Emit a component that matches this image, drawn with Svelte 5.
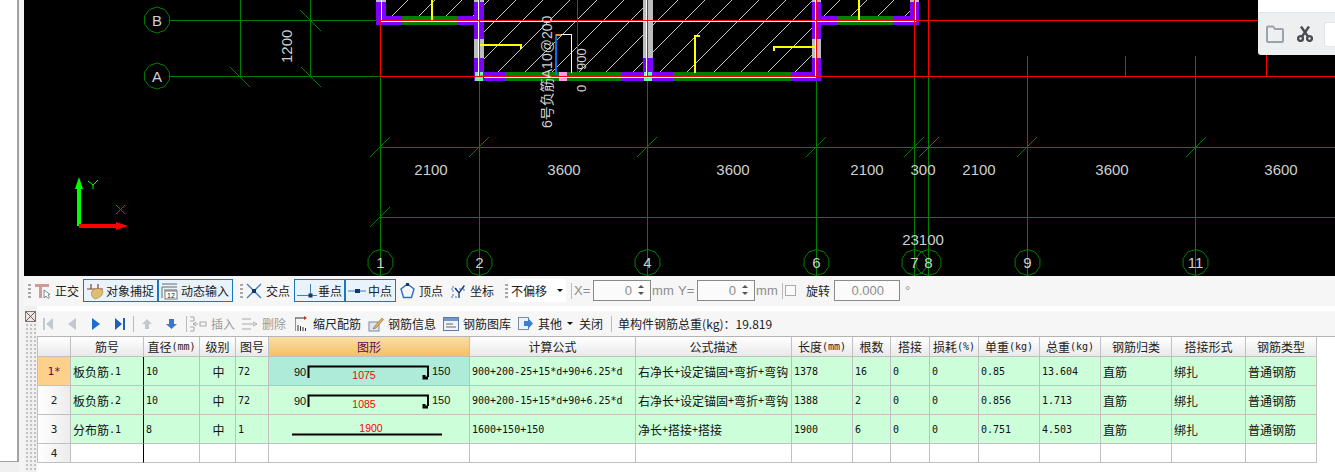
<script>
  const axisX = [
    { n: '1', x: 380 }, { n: '2', x: 479 }, { n: '4', x: 647 }, { n: '6', x: 816 },
    { n: '7', x: 914 }, { n: '8', x: 928 }, { n: '9', x: 1027 }, { n: '11', x: 1195 }
  ];
  const axisY = [{ n: 'B', y: 20 }, { n: 'A', y: 76 }];
  const dims = [
    ['2100', 431], ['3600', 564], ['3600', 733], ['2100', 867],
    ['300', 923], ['2100', 979], ['3600', 1112], ['3600', 1281]
  ];
  const ticks = [
    [230, 67, 250, 87], [300, 10, 321, 31], [301, 67, 321, 87],
    [370, 227, 390, 207], [370, 157, 390, 137], [469, 157, 489, 137],
    [637, 157, 657, 137], [806, 157, 826, 137], [904, 157, 924, 137], [919, 157, 939, 137],
    [1017, 157, 1037, 137], [1186, 157, 1206, 137]
  ];
  // wall pieces: x, y, w, h, colour
  const P = '#7f00ff', G = '#007f00', S = '#bdbdbd';
  const walls = [
    [376, 2, 10, 23, P], [376, 0, 10, 2, S], [386, 16, 16, 9, P], [402, 16, 56, 9, G], [458, 16, 16, 9, P],
    [474, 0, 10, 2, S], [474, 2, 10, 37, P], [474, 39, 10, 19, S], [474, 58, 10, 23, P],
    [484, 72, 21, 9, P], [505, 72, 117, 9, G], [559, 72, 8, 9, '#ff99e6'], [622, 72, 21, 9, P],
    [643, 0, 10, 58, S], [643, 58, 10, 23, P],
    [653, 72, 20, 9, P], [673, 72, 118, 9, G], [791, 72, 21, 9, P],
    [812, 0, 9, 2, S], [812, 2, 9, 37, P], [812, 39, 9, 19, S], [812, 58, 9, 23, P],
    [821, 16, 16, 9, P], [837, 16, 57, 9, G], [894, 16, 16, 9, P], [910, 2, 9, 23, P], [910, 0, 9, 2, S]
  ];
  const rooms = [[386, 0, 88, 16], [484, 0, 159, 72], [653, 0, 159, 72], [821, 0, 89, 16]];
  const hatch = [];
  for (let c = 300; c < 1020; c += 27) hatch.push(c);
  const corners = [[474, 72], [643, 72]];

  function decagon(cx, cy, r) {
    const pts = [];
    for (let i = 0; i < 10; i++) {
      const a = (Math.PI / 5) * i + Math.PI / 10;
      pts.push((cx + r * Math.cos(a)).toFixed(1) + ',' + (cy + r * Math.sin(a)).toFixed(1));
    }
    return pts.join(' ');
  }

  // the old grid font is half width for latin, so latin and CJK runs get separate spans
  function runs(text) {
    return String(text).match(/[\x20-\x7e]+|[^\x20-\x7e]+/g) ?? [];
  }
  const isAscii = (s) => /^[\x20-\x7e]/.test(s);

  const headers = ['', '筋号', '直径(mm)', '级别', '图号', '图形', '计算公式', '公式描述', '长度(mm)', '根数', '搭接', '损耗(%)', '单重(kg)', '总重(kg)', '钢筋归类', '搭接形式', '钢筋类型'];
  const rows = [
    { no: '1*', name: '板负筋.1', d: '10', fig: '72', shape: 'hook', a: '90', m: '1075', b: '150', f: '900+200-25+15*d+90+6.25*d', desc: '右净长+设定锚固+弯折+弯钩', len: '1378', cnt: '16', uw: '0.85', tw: '13.604' },
    { no: '2', name: '板负筋.2', d: '10', fig: '72', shape: 'hook', a: '90', m: '1085', b: '150', f: '900+200-15+15*d+90+6.25*d', desc: '右净长+设定锚固+弯折+弯钩', len: '1388', cnt: '2', uw: '0.856', tw: '1.713' },
    { no: '3', name: '分布筋.1', d: '8', fig: '1', shape: 'line', m: '1900', f: '1600+150+150', desc: '净长+搭接+搭接', len: '1900', cnt: '6', uw: '0.751', tw: '4.503' }
  ];
</script>

{#snippet txt(value)}
  {#each runs(value) as r}<span class:asc={isAscii(r)}>{r}</span>{/each}
{/snippet}

<div class="page">
  <div class="side">
    <div class="side-white"></div>
    <div class="side-foot"></div>
  </div>
  <div class="main">
    <div class="canvas">
      <svg class="cad" viewBox="24 0 1311 276" width="1311" height="276">
        <defs>
          {#each rooms as r, i}
            <clipPath id="room{i}"><rect x={r[0]} y={r[1]} width={r[2]} height={r[3]} /></clipPath>
          {/each}
        </defs>
        <g shape-rendering="crispEdges">
          {#each rooms as r, i}
            <g clip-path="url(#room{i})">
              {#each hatch as c}
                <line x1={c - 100} y1="100" x2={c} y2="0" stroke="#c8c8c8" />
              {/each}
            </g>
          {/each}
          <!-- axis lines -->
          <g stroke="#008000">
            <line x1="170" y1="20.5" x2="380" y2="20.5" />
            <line x1="170" y1="76.5" x2="380" y2="76.5" />
            <line x1="240.5" y1="0" x2="240.5" y2="76" />
            <line x1="310.5" y1="0" x2="310.5" y2="76" />
            <line x1="380" y1="147.5" x2="1335" y2="147.5" />
            <line x1="380" y1="217.5" x2="1335" y2="217.5" />
            {#each axisX as a}
              <line x1={a.x + 0.5} y1="77" x2={a.x + 0.5} y2="276" />
            {/each}
          </g>
          <!-- walls -->
          {#each walls as w}
            <rect x={w[0]} y={w[1]} width={w[2]} height={w[3]} fill={w[4]} />
          {/each}
          {#each corners as c}
            <rect x={c[0] + 1} y={c[1]} width="8" height="9" fill="#66ff99" />
            <rect x={c[0] + 4} y={c[1] + 3} width="5" height="2" fill="#00ccff" />
          {/each}
          <!-- yellow bars -->
          <g fill="#ffff00">
            <rect x="431" y="0" width="2" height="20" />
            <rect x="858" y="0" width="2" height="20" />
            <rect x="479" y="44" width="42" height="2" />
            <rect x="520" y="44" width="2" height="5" />
            <rect x="773" y="46" width="42" height="2" />
            <rect x="773" y="46" width="2" height="5" />
            <rect x="694" y="35" width="2" height="38" />
            <rect x="694" y="35" width="6" height="2" />
          </g>
          <!-- white centre lines -->
          <g stroke="#ffffff">
            <line x1="381" y1="0" x2="381" y2="20" />
            <line x1="380" y1="21.5" x2="916" y2="21.5" />
            <line x1="478.5" y1="0" x2="478.5" y2="77" />
            <line x1="646.5" y1="0" x2="646.5" y2="77" />
            <line x1="815.5" y1="0" x2="815.5" y2="77" />
            <line x1="915" y1="0" x2="915" y2="22" />
            <line x1="484" y1="77.5" x2="816" y2="77.5" />
          </g>
          <!-- red frame -->
          <g stroke="#ff0000">
            <line x1="380" y1="20.5" x2="1258" y2="20.5" />
            <line x1="380" y1="76.5" x2="1335" y2="76.5" />
            <line x1="380.5" y1="20" x2="380.5" y2="76" />
            <line x1="479.5" y1="0" x2="479.5" y2="76" />
            <line x1="577.5" y1="0" x2="577.5" y2="76" />
            <line x1="647.5" y1="0" x2="647.5" y2="76" />
            <line x1="816.5" y1="0" x2="816.5" y2="76" />
            <line x1="914.5" y1="0" x2="914.5" y2="76" />
            <line x1="928.5" y1="0" x2="928.5" y2="76" />
            <line x1="1027.5" y1="56" x2="1027.5" y2="76" />
            <line x1="1125.5" y1="56" x2="1125.5" y2="76" />
            <line x1="1195.5" y1="56" x2="1195.5" y2="76" />
            <line x1="1266.5" y1="0" x2="1266.5" y2="76" />
          </g>
          <!-- rebar sketch -->
          <rect x="555" y="34" width="2" height="41" fill="#0a6ee6" />
          <rect x="556" y="34" width="5" height="2" fill="#e8862a" />
          <rect x="561" y="34" width="11" height="1" fill="#ffffff" />
          <rect x="571" y="34" width="1" height="39" fill="#ffffff" />
        </g>
        <!-- ticks and bubbles -->
        <g stroke="#008000" fill="none">
          {#each ticks as t}
            <line x1={t[0]} y1={t[1]} x2={t[2]} y2={t[3]} />
          {/each}
          {#each axisY as a}
            <polygon points={decagon(157, a.y, 13)} />
          {/each}
          {#each axisX as a}
            <polygon points={decagon(a.x + 0.5, 262.5, 13)} />
          {/each}
        </g>
        <g class="cad-text">
          {#each axisY as a}
            <text x="157" y={a.y + 6} text-anchor="middle">{a.n}</text>
          {/each}
          {#each axisX as a}
            <text x={a.x + 0.5} y="268" text-anchor="middle">{a.n}</text>
          {/each}
          {#each dims as d}
            <text x={d[1]} y="175" text-anchor="middle">{d[0]}</text>
          {/each}
          <text x="923" y="245" text-anchor="middle">23100</text>
          <text transform="translate(292 63) rotate(-90)">1200</text>
          <text class="small" transform="translate(552 128) rotate(-90)">6号负筋A10@200</text>
          <text class="tiny" transform="translate(586 70) rotate(-90)">900</text>
          <text class="tiny" transform="translate(586 92) rotate(-90)">0</text>
        </g>
        <!-- ucs -->
        <g shape-rendering="crispEdges">
          <rect x="77" y="187" width="4" height="39" fill="#00ff00" />
          <rect x="79" y="224" width="39" height="4" fill="#ff0000" />
        </g>
        <polygon points="79,177 83,189 75,189" fill="#00ff00" />
        <polygon points="128,226 116,222 116,230" fill="#ff0000" />
        <path d="M88 181 L93 185 L98 180 M93 185 V189" stroke="#00ff00" fill="none" />
        <path d="M116 205 L125 214 M125 205 L116 214" stroke="#ff0000" fill="none" />
      </svg>

      <div class="float">
        <div class="float-top"></div>
        <div class="float-body">
          <svg width="20" height="18" viewBox="0 0 20 18" class="fold">
            <path d="M2 16 V2.5 Q2 1.5 3 1.5 H8 L10 4 H17 Q18 4 18 5 V16 Q18 17 17 17 H3 Q2 17 2 16 Z" fill="none" stroke="#9aa3ab" stroke-width="2" />
          </svg>
          <svg width="16" height="16" viewBox="0 0 16 16" class="sciss">
            <g fill="none" stroke="#4a4d50" stroke-width="2.4">
              <circle cx="3.5" cy="12.5" r="2.4" />
              <circle cx="12.5" cy="12.5" r="2.4" />
              <path d="M5 10.5 L12 0.5 M11 10.5 L4 0.5" />
            </g>
          </svg>
          <div class="float-input"></div>
        </div>
      </div>
    </div>

    <div class="bar1">
      <span class="grip"></span>
      <div class="tool t-ortho">
        <svg width="16" height="16" viewBox="0 0 16 16">
          <path d="M0 2.5 H14 M5.5 2 V15" stroke="#d09a9a" stroke-width="3" fill="none" />
          <path d="M9 7 V15 L11 13 L13 15.5 L14.5 14.5 L13 12 L15 11.5 Z" fill="#fff" stroke="#5a6a7a" stroke-width="0.8" />
        </svg>
        <span>正交</span>
      </div>
      <div class="tool on w75 ml4">
        <svg width="18" height="18" viewBox="0 0 18 18">
          <path d="M1 7 H17 M5 2 V7 M12 2 V7" stroke="#9a3a2a" stroke-width="1.2" fill="none" />
          <path d="M6 9 Q12 4 17 9 Q17 15 9 17 Q4 14 6 9 Z" fill="#e0c070" stroke="#a08030" stroke-width="0.6" />
        </svg>
        <span>对象捕捉</span>
      </div>
      <div class="tool on w75 gap3">
        <svg width="17" height="18" viewBox="0 0 17 18">
          <path d="M1 2 H16 M1 5 H16 M1 5 V16 M3 8 H16" stroke="#6a6a6a" fill="none" />
          <rect x="4" y="9" width="12" height="8" fill="#fff" stroke="#777" />
          <text x="10" y="16" class="mini" text-anchor="middle">12</text>
        </svg>
        <span>动态输入</span>
      </div>
      <span class="grip g2"></span>
      <div class="tool t-cross">
        <svg width="16" height="16" viewBox="0 0 16 16">
          <path d="M1 1 L15 15 M15 1 L1 15" stroke="#3d7fc4" stroke-width="1.4" />
          <rect x="6" y="6" width="4" height="4" fill="#10386f" />
        </svg>
        <span>交点</span>
      </div>
      <div class="tool on w51 ml4">
        <svg width="20" height="16" viewBox="0 0 20 16">
          <path d="M0 12.5 H20" stroke="#3d7fc4" />
          <path d="M13.5 1 V12" stroke="#3d7fc4" />
          <rect x="11.5" y="10.5" width="4" height="4" fill="#10386f" />
        </svg>
        <span>垂点</span>
      </div>
      <div class="tool on w51 gap2">
        <svg width="18" height="16" viewBox="0 0 18 16">
          <path d="M0 8 H18" stroke="#3d7fc4" />
          <rect x="7" y="6" width="5" height="4" fill="#10386f" />
        </svg>
        <span>中点</span>
      </div>
      <div class="tool ml4">
        <svg width="15" height="16" viewBox="0 0 15 16">
          <path d="M7.5 1 L14 6 L11.5 14.5 H3.5 L1 6 Z" fill="none" stroke="#2f6fc0" stroke-width="1.4" />
          <rect x="6" y="0" width="3" height="3" fill="#10386f" />
        </svg>
        <span>顶点</span>
      </div>
      <div class="tool ml7">
        <svg width="16" height="16" viewBox="0 0 16 16">
          <path d="M1 6 H14 M1 14 H8 M3 3 V15 M14 2 V10" stroke="#3d7fc4" stroke-dasharray="2 2" fill="none" />
          <path d="M5 5 L9 10 L14 3 M9 10 V15" stroke="#10386f" stroke-width="1.3" fill="none" />
        </svg>
        <span>坐标</span>
      </div>
      <span class="grip g3"></span>
      <div class="select">
        <span>不偏移</span>
        <i class="caret"></i>
      </div>
      <span class="sep s1"></span>
      <span class="lbl x">X=</span>
      <div class="num n1"><span>0</span><b></b></div>
      <span class="lbl mm">mm</span>
      <span class="lbl y">Y=</span>
      <div class="num n1"><span>0</span><b></b></div>
      <span class="lbl mm">mm</span>
      <span class="sep s2"></span>
      <span class="check"></span>
      <span class="rot">旋转</span>
      <div class="num n2"><span>0.000</span><b></b></div>
      <span class="lbl deg">°</span>
    </div>

    <div class="lower">
      <div class="grip-col">
        <svg width="11" height="11" viewBox="0 0 11 11" class="close-x">
          <rect x="0.5" y="0.5" width="10" height="10" fill="#e8e8e8" stroke="#777" />
          <path d="M1 1 L10 10 M10 1 L1 10" stroke="#8a4a4a" />
        </svg>
        <div class="dots"></div>
      </div>
      <div class="panel">
        <div class="bar2">
          <svg class="nav n-first" width="10" height="12" viewBox="0 0 10 12"><path d="M0 0 H2 V12 H0 Z M10 0 V12 L3 6 Z" fill="#c4c8cc" /></svg>
          <svg class="nav n-prev" width="8" height="12" viewBox="0 0 8 12"><path d="M8 0 V12 L0 6 Z" fill="#c4c8cc" /></svg>
          <svg class="nav n-next" width="8" height="12" viewBox="0 0 8 12"><path d="M0 0 V12 L8 6 Z" fill="#1f6fd0" /></svg>
          <svg class="nav n-last" width="10" height="12" viewBox="0 0 10 12"><path d="M0 0 V12 L7 6 Z M8 0 H10 V12 H8 Z" fill="#1f5fb8" /></svg>
          <span class="sep s3"></span>
          <svg class="nav n-up" width="10" height="10" viewBox="0 0 10 10"><path d="M5 0 L10 5 H7 V10 H3 V5 H0 Z" fill="#c4c8cc" /></svg>
          <svg class="nav n-down" width="11" height="10" viewBox="0 0 11 10"><path d="M5.5 10 L11 5 H8 V0 H3 V5 H0 Z" fill="#3a78d0" /></svg>
          <span class="sep s4"></span>
          <div class="tool off b-ins">
            <svg width="17" height="16" viewBox="0 0 17 16"><path d="M0 1 H4 V5 H0 M0 11 H4 V15 H0 M8 8 H3 M6 6 L3 8 L6 10" stroke="#a8a8a8" fill="none" /><rect x="10" y="6" width="6" height="4" fill="none" stroke="#a8a8a8" /></svg>
            <span>插入</span>
          </div>
          <div class="tool off b-del">
            <svg width="16" height="16" viewBox="0 0 16 16"><path d="M0 3 H9 M0 8 H12 M0 13 H9 M11 6 L15 8 L11 10" stroke="#a8a8a8" fill="none" /></svg>
            <span>删除</span>
          </div>
          <div class="tool gap6 b-scale">
            <svg width="12" height="16" viewBox="0 0 12 16"><path d="M0 2 V15 M0 2 H9 M3 15 V9 M5.5 15 V10 M8 15 V11 M10.5 15 V12" stroke="#333" fill="none" /><path d="M9 0 L12 2 L9 4 Z" fill="#c03020" /></svg>
            <span>缩尺配筋</span>
          </div>
          <div class="tool b-info">
            <svg width="16" height="16" viewBox="0 0 16 16"><rect x="1" y="6" width="10" height="9" fill="#dfe6f0" stroke="#7a8aa0" /><path d="M6 11 L14 2 L15.5 3.5 L8 12 L5 13 Z" fill="#e8b060" stroke="#8a6030" stroke-width="0.6" /></svg>
            <span>钢筋信息</span>
          </div>
          <div class="tool b-lib">
            <svg width="16" height="14" viewBox="0 0 16 14"><rect x="0.5" y="0.5" width="15" height="13" fill="#f0f4fa" stroke="#5a7aa8" /><rect x="1" y="1" width="14" height="3" fill="#6f98d0" /><path d="M3 7 H10 M3 10 H13" stroke="#666" /></svg>
            <span>钢筋图库</span>
          </div>
          <div class="tool gap5 b-other">
            <svg width="15" height="15" viewBox="0 0 15 15"><rect x="0.5" y="1.5" width="10" height="12" fill="#eef2f8" stroke="#7a8aa0" /><path d="M6 5 H10 V2 L15 7.5 L10 13 V10 H6 Z" fill="#3a7fd0" /></svg>
            <span>其他</span>
            <i class="caret small"></i>
          </div>
          <span class="close-txt">关闭</span>
          <span class="sep s5"></span>
          <span class="total">单构件钢筋总重(kg)：19.819</span>
        </div>

        <div class="grid">
          {#each headers as h, i}
            <div class="cell head" class:hot={i === 5}>{@render txt(h)}</div>
          {/each}
          {#each rows as r, i}
            <div class="cell rowhead" class:cur={i === 0}>{r.no}</div>
            <div class="cell body thick">{@render txt(r.name)}</div>
            <div class="cell body">{@render txt(r.d)}</div>
            <div class="cell body mid">中</div>
            <div class="cell body">{@render txt(r.fig)}</div>
            <div class="cell body shape" class:sel={i === 0}>
              <svg width="200" height="28" viewBox="0 0 200 28">
                {#if r.shape === 'hook'}
                  <text x="25" y="19" class="dim">{r.a}</text>
                  <path d="M39.5 21 V9.5 H159 V20" fill="none" stroke="#000" stroke-width="2" />
                  <path d="M159 21 H155 V18" fill="none" stroke="#000" stroke-width="3" />
                  <text x="95" y="22" class="red" text-anchor="middle">{r.m}</text>
                  <text x="163" y="18" class="dim">{r.b}</text>
                {:else}
                  <text x="102" y="17" class="red" text-anchor="middle">{r.m}</text>
                  <path d="M23 19.5 H173" stroke="#000" stroke-width="2" />
                {/if}
              </svg>
            </div>
            <div class="cell body">{@render txt(r.f)}</div>
            <div class="cell body">{@render txt(r.desc)}</div>
            <div class="cell body">{@render txt(r.len)}</div>
            <div class="cell body">{@render txt(r.cnt)}</div>
            <div class="cell body">{@render txt('0')}</div>
            <div class="cell body">{@render txt('0')}</div>
            <div class="cell body">{@render txt(r.uw)}</div>
            <div class="cell body">{@render txt(r.tw)}</div>
            <div class="cell body">直筋</div>
            <div class="cell body">绑扎</div>
            <div class="cell body">普通钢筋</div>
          {/each}
          <div class="cell rowhead">4</div>
          <div class="cell thick"></div>
          {#each Array(15) as _}
            <div class="cell"></div>
          {/each}
        </div>
      </div>
    </div>
  </div>
</div>

<style>
  :global(body) {
    margin: 0;
    background: #fff;
    overflow: hidden;
  }
  .page {
    display: flex;
    width: 1335px;
    height: 472px;
    overflow: hidden;
    font: 12px "Noto Sans CJK SC", "Liberation Sans", sans-serif;
    color: #222;
  }
  .side {
    width: 19px;
    flex: none;
    display: flex;
    flex-direction: column;
  }
  .side-white {
    height: 462px;
    box-sizing: border-box;
    border-right: 2px solid #a2a2a2;
    border-bottom: 1px solid #a2a2a2;
  }
  .side-foot {
    flex: 1;
    background: #f0f0f0;
  }
  .main {
    flex: 1;
    min-width: 0;
    padding-left: 5px;
    background: #f4f4f4;
  }
  .canvas {
    position: relative;
    height: 276px;
    background: #000;
    overflow: hidden;
  }
  .cad {
    display: block;
  }
  .cad-text text {
    font: 15px "Liberation Sans", "Noto Sans CJK SC", sans-serif;
    fill: #cfcfcf;
  }
  .cad-text text.small {
    font-size: 14px;
  }
  .cad-text text.tiny {
    font-size: 13px;
  }
  .mini {
    font: 7px "Liberation Sans", sans-serif;
    fill: #222;
  }

  .float {
    position: absolute;
    top: 0;
    left: 1234px;
    width: 77px;
  }
  .float-top {
    height: 12px;
    background: #fff;
  }
  .float-body {
    height: 43px;
    background: #edeff0;
    border-top: 1px solid #dfe3e6;
    box-sizing: border-box;
    border-bottom-left-radius: 3px;
    display: flex;
    align-items: center;
  }
  .fold {
    margin-left: 7px;
  }
  .sciss {
    margin-left: 12px;
  }
  .float-input {
    width: 11px;
    height: 25px;
    margin-left: 11px;
    background: #fff;
    border-radius: 3px 0 0 3px;
    border: 1px solid #e2e4e6;
    border-right: 0;
    box-sizing: border-box;
  }

  .bar1 {
    height: 30px;
    display: flex;
    align-items: center;
    background: #f6f6f6;
    padding-left: 4px;
    padding-bottom: 3px;
    box-sizing: border-box;
    padding-top: 2px;
    white-space: nowrap;
  }
  .grip {
    width: 3px;
    height: 14px;
    flex: none;
    background: repeating-linear-gradient(#a8a8a8 0 2px, transparent 2px 4px);
  }
  .g2 {
    margin-left: 7px;
  }
  .g3 {
    margin-left: 11px;
  }
  .tool {
    display: flex;
    align-items: center;
    gap: 4px;
    flex: none;
    height: 23px;
    box-sizing: border-box;
  }
  .tool svg {
    flex: none;
  }
  .t-ortho {
    margin-left: 4px;
  }
  .t-cross {
    margin-left: 3px;
  }
  .on {
    border: 1px solid #1678c2;
    background: #e9f3fb;
    padding-left: 2px;
    gap: 2px;
  }
  .w75 {
    width: 75px;
  }
  .w51 {
    width: 51px;
    gap: 1px;
  }
  .gap2 {
    gap: 2px;
  }
  .gap3 {
    gap: 3px;
  }
  .ml4 {
    margin-left: 4px;
  }
  .ml7 {
    margin-left: 7px;
  }
  .select {
    width: 57px;
    height: 23px;
    margin-left: 1px;
    background: #fff;
    display: flex;
    align-items: center;
    justify-content: space-between;
    padding: 0 3px 0 2px;
    box-sizing: border-box;
    flex: none;
  }
  .caret {
    width: 0;
    height: 0;
    border: 3px solid transparent;
    border-top: 3px solid #111;
    border-bottom: 0;
    flex: none;
  }
  .sep {
    width: 1px;
    height: 16px;
    background: #bbb;
    flex: none;
  }
  .s1 {
    margin-left: 5px;
  }
  .s2 {
    margin-left: 5px;
  }
  .lbl {
    color: #8c8c8c;
    font: 13px "Liberation Sans", sans-serif;
    flex: none;
  }
  .x {
    margin-left: 2px;
    width: 19px;
  }
  .y {
    margin-left: 5px;
    width: 19px;
  }
  .mm {
    margin-left: 1px;
    width: 21px;
  }
  .num {
    height: 21px;
    box-sizing: border-box;
    border: 1px solid #8a8a8a;
    background: #fbfbfb;
    color: #8c8c8c;
    font: 13px "Liberation Sans", sans-serif;
    display: flex;
    align-items: center;
    justify-content: flex-end;
    flex: none;
    position: relative;
  }
  .n1 {
    width: 58px;
    padding-right: 18px;
  }
  .n2 {
    width: 66px;
    margin-left: 4px;
    padding-right: 15px;
  }
  .num b {
    position: absolute;
    right: 6px;
    top: 4px;
    width: 0;
    height: 0;
    border-left: 3px solid transparent;
    border-right: 3px solid transparent;
    border-bottom: 3px solid #555;
  }
  .num b::after {
    content: "";
    position: absolute;
    left: -3px;
    top: 7px;
    border-left: 3px solid transparent;
    border-right: 3px solid transparent;
    border-top: 3px solid #555;
  }
  .n2 b {
    display: none;
  }
  .check {
    width: 11px;
    height: 11px;
    margin-left: 2px;
    box-sizing: border-box;
    border: 1px solid #aaa;
    background: #fafafa;
    flex: none;
  }
  .rot {
    margin-left: 10px;
    flex: none;
  }
  .deg {
    margin-left: 5px;
  }

  .lower {
    display: flex;
    height: 166px;
  }
  .grip-col {
    width: 12px;
    flex: none;
    background: #f0f0f0;
    padding-top: 5px;
    margin-left: 1px;
  }
  .close-x {
    display: block;
  }
  .dots {
    height: 150px;
    background-image: radial-gradient(#c2c2c2 1px, transparent 1.2px);
    background-size: 4px 4px;
    margin-top: 1px;
  }
  .panel {
    flex: 1;
    min-width: 0;
    background: #fff;
    padding-top: 0;
  }
  .bar2 {
    height: 25px;
    margin-top: 5px;
    display: flex;
    align-items: center;
    background: #f6f6f6;
    white-space: nowrap;
    padding-left: 6px;
    box-sizing: content-box;
    border-bottom: 1px solid #b4b4b4;
  }
  .nav {
    flex: none;
  }
  .n-prev {
    margin-left: 15px;
  }
  .n-next {
    margin-left: 16px;
  }
  .n-last {
    margin-left: 15px;
  }
  .s3 {
    margin-left: 8px;
  }
  .n-up {
    margin-left: 8px;
  }
  .n-down {
    margin-left: 14px;
  }
  .s4 {
    margin-left: 9px;
  }
  .off {
    color: #9a9a9a;
  }
  .b-ins {
    margin-left: 3px;
  }
  .b-del {
    margin-left: 7px;
  }
  .b-scale {
    margin-left: 9px;
  }
  .gap6 {
    gap: 6px;
  }
  .b-info,
  .b-lib {
    margin-left: 7px;
  }
  .b-other {
    margin-left: 7px;
  }
  .gap5 {
    gap: 5px;
  }
  .close-txt {
    margin-left: 6px;
    flex: none;
  }
  .s5 {
    margin-left: 8px;
  }
  .total {
    margin-left: 6px;
    flex: none;
  }

  .grid {
    display: grid;
    grid-template-columns: 33px 73px 56px 36px 33px 201px 166px 156px 61px 38px 39px 49px 61px 61px 71px 74px 71px;
    grid-template-rows: 20px 29px 29px 29px 19px;
    width: 1279px;
    border-left: 1px solid #c0c0c0;
    margin-left: 0;
  }
  .cell {
    box-sizing: border-box;
    border-right: 1px solid #c0c0c0;
    border-bottom: 1px solid #c0c0c0;
    display: flex;
    align-items: center;
    overflow: hidden;
    white-space: nowrap;
    background: #fff;
  }
  .asc {
    font: 10px "DejaVu Sans Mono", "Liberation Mono", monospace;
  }
  .head {
    justify-content: center;
    background: linear-gradient(#ffffff, #e9e9e9);
  }
  .hot {
    background: linear-gradient(#fbdfa6, #f3c064);
    color: #5b0a5b;
  }
  .rowhead {
    justify-content: center;
    background: linear-gradient(90deg, #ffffff, #ececec);
    font: 11px "DejaVu Sans Mono", monospace;
  }
  .cur {
    background: #fdd08c;
    color: #5b0a5b;
  }
  .body {
    background: #ccffd9;
    padding-left: 2px;
    color: #111;
  }
  .thick {
    border-right: 1px solid #000;
  }
  .mid {
    justify-content: center;
  }
  .shape {
    padding: 0;
  }
  .sel {
    background: #aeebd8;
  }
  .dim {
    font: 11px "Liberation Sans", sans-serif;
    fill: #111;
  }
  .red {
    font: 10.5px "Liberation Sans", sans-serif;
    fill: #ff0000;
  }
</style>
